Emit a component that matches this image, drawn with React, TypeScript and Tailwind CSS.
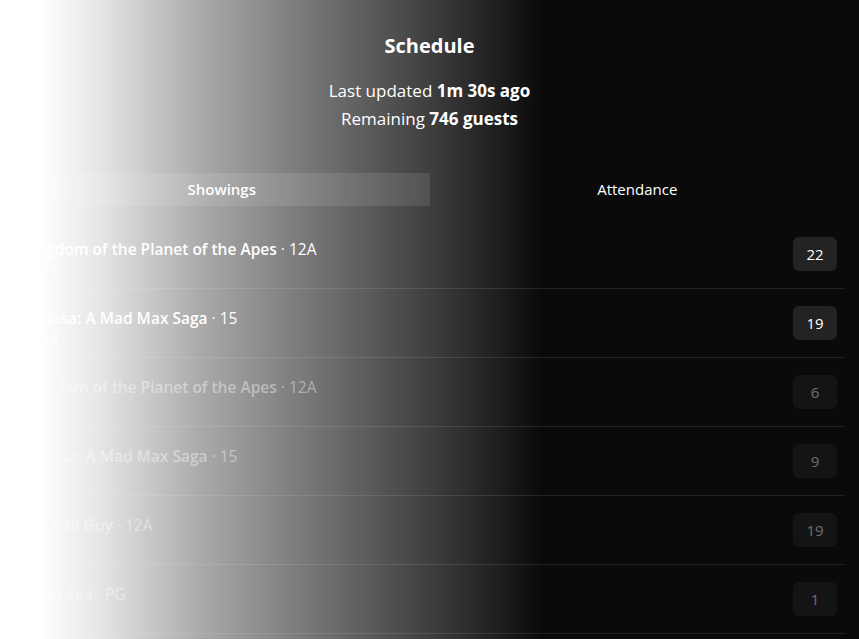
type Showing = {
  id: number;
  title: string;
  rating: string;
  time: string;
  seats: number;
  past: boolean;
};

const showings: Showing[] = [
  { id: 1, title: "Kingdom of the Planet of the Apes", rating: "12A", time: "17:15", seats: 22, past: false },
  { id: 2, title: "Furiosa: A Mad Max Saga", rating: "15", time: "17:20", seats: 19, past: false },
  { id: 3, title: "Kingdom of the Planet of the Apes", rating: "12A", time: "19:45", seats: 6, past: true },
  { id: 4, title: "Furiosa: A Mad Max Saga", rating: "15", time: "20:30", seats: 9, past: true },
  { id: 5, title: "The Fall Guy", rating: "12A", time: "20:50", seats: 19, past: true },
  { id: 6, title: "Go to Sea", rating: "PG", time: "21:10", seats: 1, past: true },
];

export default function App() {
  return (
    <div className="min-h-screen w-full bg-[linear-gradient(to_right,#ffffff_4.5%,#e6e6e6_11.6%,#aaaaaa_23.3%,#0a0a0a_63%)] text-white font-['Open_Sans',sans-serif]">
      <div className="px-[14px] pt-[30px]">
        <h1 className="text-center text-xl leading-8 font-bold">Schedule</h1>

        <div className="mt-[15px] text-center text-[17px] leading-7">
          <p>
            Last updated <span className="font-bold">1m 30s ago</span>
          </p>
          <p>
            Remaining <span className="font-bold">746 guests</span>
          </p>
        </div>

        <div className="mt-10 grid grid-cols-2 text-[15px]">
          <button className="h-[33px] bg-white/10 font-semibold">Showings</button>
          <button className="h-[33px]">Attendance</button>
        </div>

        <div className="mt-[14px] flex flex-col">
          {showings.map((s) => (
            <div
              key={s.id}
              className="flex items-start justify-between border-b border-white/10 pt-[17px] pb-[7px] pl-2 pr-2"
            >
              <div className={s.past ? "flex flex-col opacity-40" : "flex flex-col"}>
                <p className="text-[15.5px] leading-6">
                  <span className="font-semibold">{s.title}</span> · {s.rating}
                </p>
                <p className="text-sm leading-5 text-white/90">{s.time}</p>
              </div>
              <span
                className={
                  s.past
                    ? "flex h-[34px] w-[44px] items-center justify-center rounded-md bg-white/10 text-[15px] opacity-40"
                    : "flex h-[34px] w-[44px] items-center justify-center rounded-md bg-white/10 text-[15px]"
                }
              >
                {s.seats}
              </span>
            </div>
          ))}
        </div>
      </div>
    </div>
  );
}
